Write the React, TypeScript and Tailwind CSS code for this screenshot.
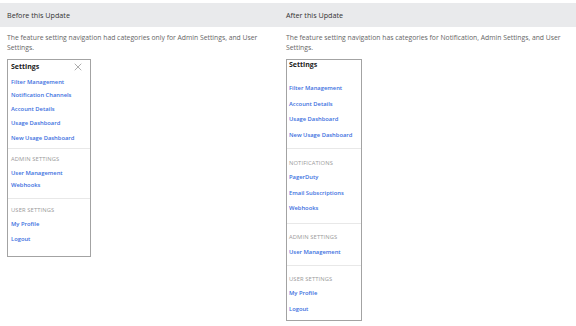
import { X } from "lucide-react";

type Item = { name: string; h: string };
type Section = { label?: string; items: Item[]; className: string; labelClass?: string };

const BEFORE: Section[] = [
  {
    className: "pt-[2px] pb-[2px]",
    items: [
      { name: "Filter Management", h: "h-[13px]" },
      { name: "Notification Channels", h: "h-[13px]" },
      { name: "Account Details", h: "h-[14px]" },
      { name: "Usage Dashboard", h: "h-[15px]" },
      { name: "New Usage Dashboard", h: "h-[15px]" },
    ],
  },
  {
    label: "Admin Settings",
    labelClass: "h-[15px]",
    className: "pt-[3px] pb-[7px] border-t border-[#e8e8e8]",
    items: [
      { name: "User Management", h: "h-[13px]" },
      { name: "Webhooks", h: "h-[11px]" },
    ],
  },
  {
    label: "User Settings",
    labelClass: "h-[15px]",
    className: "pt-[4px] pb-[9px] border-t border-[#e8e8e8]",
    items: [
      { name: "My Profile", h: "h-[13px]" },
      { name: "Logout", h: "h-[16px]" },
    ],
  },
];

const AFTER: Section[] = [
  {
    className: "pt-[11px] pb-[5px]",
    items: [
      { name: "Filter Management", h: "h-[15.5px]" },
      { name: "Account Details", h: "h-[15.5px]" },
      { name: "Usage Dashboard", h: "h-[15.5px]" },
      { name: "New Usage Dashboard", h: "h-[15.5px]" },
    ],
  },
  {
    label: "Notifications",
    labelClass: "h-[14px]",
    className: "pt-[7px] pb-[6px] border-t border-[#e8e8e8]",
    items: [
      { name: "PagerDuty", h: "h-[15.5px]" },
      { name: "Email Subscriptions", h: "h-[15.5px]" },
      { name: "Webhooks", h: "h-[15.5px]" },
    ],
  },
  {
    label: "Admin Settings",
    labelClass: "h-[14px]",
    className: "pt-[7px] pb-[5px] border-t border-[#e8e8e8]",
    items: [{ name: "User Management", h: "h-[15.5px]" }],
  },
  {
    label: "User Settings",
    labelClass: "h-[14px]",
    className: "pt-[6px] pb-[3px] border-t border-[#e8e8e8]",
    items: [
      { name: "My Profile", h: "h-[15.5px]" },
      { name: "Logout", h: "h-[15.5px]" },
    ],
  },
];

function Nav({ sections, pad }: { sections: Section[]; pad: string }) {
  return (
    <>
      {sections.map((s, i) => (
        <div key={i} className={s.className}>
          {s.label && (
            <div className={`${s.labelClass} ${pad} flex items-center uppercase text-[5.8px] text-[#9a9a9a] tracking-[0.02em]`}>
              {s.label}
            </div>
          )}
          {s.items.map((item) => (
            <div key={item.name} className={`${item.h} ${pad} flex items-center`}>
              <span className="text-[5.8px] font-semibold text-[#3b6fe0] whitespace-nowrap">{item.name}</span>
            </div>
          ))}
        </div>
      ))}
    </>
  );
}

export default function App() {
  return (
    <div className="w-[576px] h-[326px] bg-white pt-[3px] font-['Open_Sans',sans-serif] overflow-hidden">
      <div className="grid grid-cols-[279px_1fr]">
        <div className="h-[24px] bg-[#e9eaec] flex items-center px-[7px] text-[7.2px] text-[#333]">
          Before this Update
        </div>
        <div className="h-[24px] bg-[#e9eaec] flex items-center pl-[7px] text-[7.2px] text-[#333]">
          After this Update
        </div>

        <div className="pt-[6px] px-[7px]">
          <p className="text-[6.8px] leading-[10px] text-[#666]">
            The feature setting navigation had categories only for Admin Settings, and User Settings.
          </p>
          <div className="mt-[6px] w-[84px] border border-[#a3a3a3]">
            <div className="h-[14px] pl-[3px] pr-[6px] flex items-center justify-between">
              <span className="text-[7px] font-bold text-[#222]">Settings</span>
              <X size={12} strokeWidth={1.4} className="text-[#8a8a8a]" />
            </div>
            <Nav sections={BEFORE} pad="pl-[3px]" />
          </div>
        </div>

        <div className="pt-[6px] pl-[7px]">
          <p className="text-[6.8px] leading-[10px] text-[#666]">
            The feature setting navigation has categories for Notification, Admin Settings, and User Settings.
          </p>
          <div className="mt-[6px] w-[76px] border border-[#a3a3a3]">
            <div className="h-[10px] pl-[2px] flex items-center">
              <span className="text-[7px] font-bold text-[#222]">Settings</span>
            </div>
            <Nav sections={AFTER} pad="pl-[2px]" />
          </div>
        </div>
      </div>
    </div>
  );
}
